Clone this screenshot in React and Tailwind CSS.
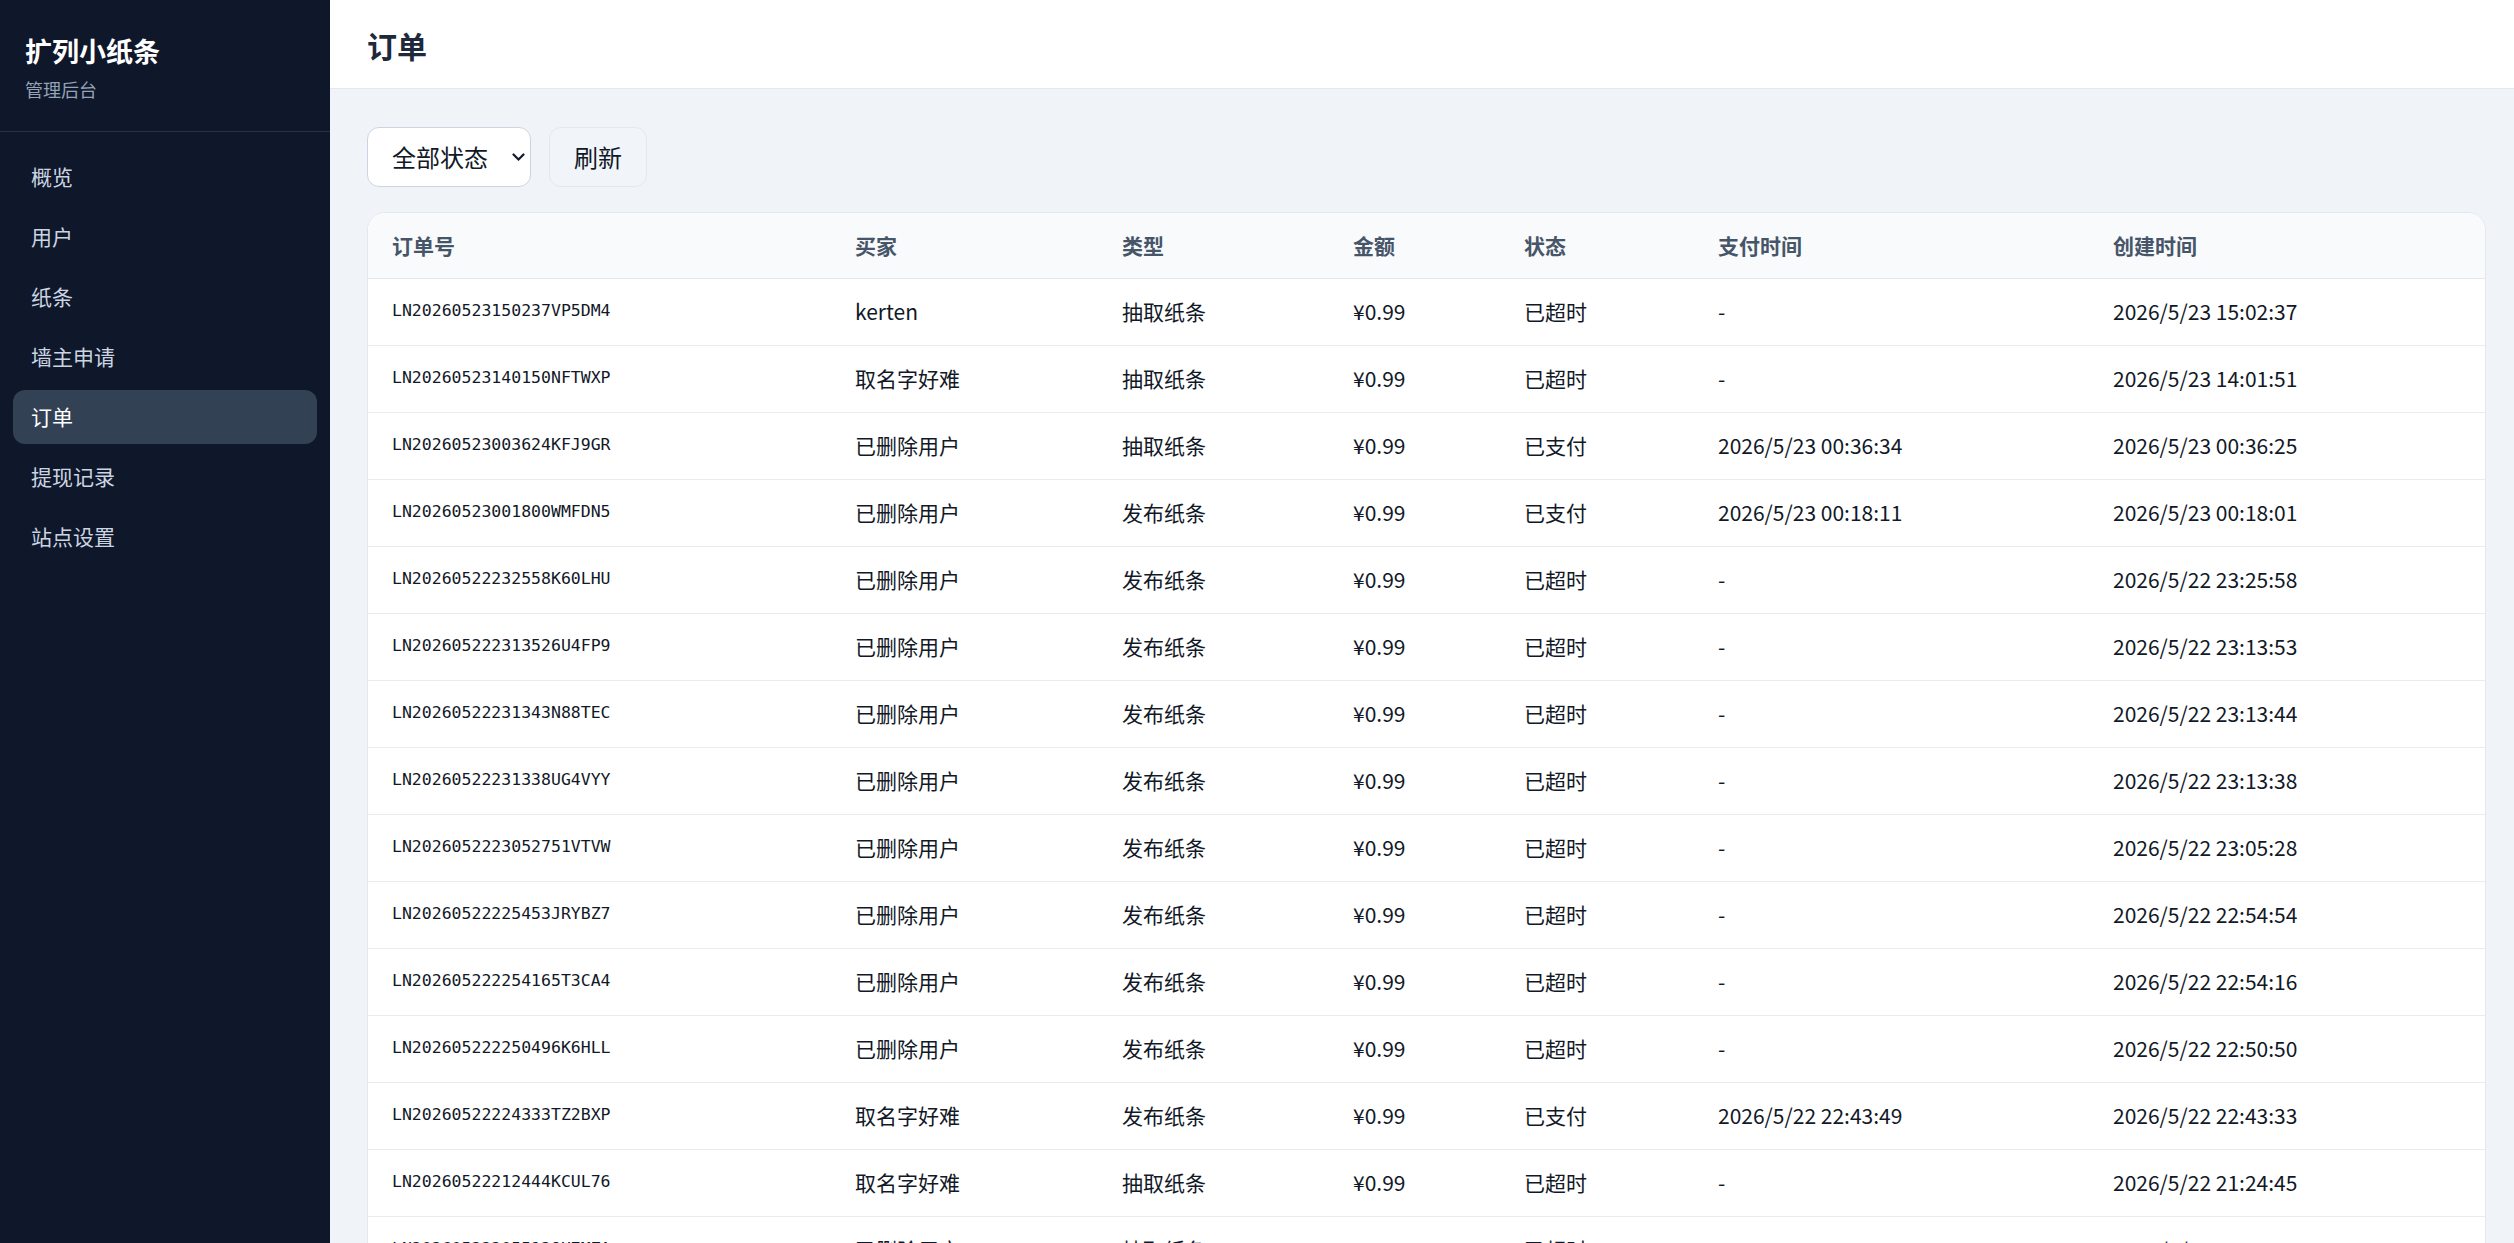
import React, { useState } from "react";

const navItems = ["概览", "用户", "纸条", "墙主申请", "订单", "提现记录", "站点设置"];

const orders = [
  ["LN20260523150237VP5DM4", "kerten", "抽取纸条", "¥0.99", "已超时", "-", "2026/5/23 15:02:37"],
  ["LN20260523140150NFTWXP", "取名字好难", "抽取纸条", "¥0.99", "已超时", "-", "2026/5/23 14:01:51"],
  ["LN20260523003624KFJ9GR", "已删除用户", "抽取纸条", "¥0.99", "已支付", "2026/5/23 00:36:34", "2026/5/23 00:36:25"],
  ["LN20260523001800WMFDN5", "已删除用户", "发布纸条", "¥0.99", "已支付", "2026/5/23 00:18:11", "2026/5/23 00:18:01"],
  ["LN20260522232558K60LHU", "已删除用户", "发布纸条", "¥0.99", "已超时", "-", "2026/5/22 23:25:58"],
  ["LN202605222313526U4FP9", "已删除用户", "发布纸条", "¥0.99", "已超时", "-", "2026/5/22 23:13:53"],
  ["LN20260522231343N88TEC", "已删除用户", "发布纸条", "¥0.99", "已超时", "-", "2026/5/22 23:13:44"],
  ["LN20260522231338UG4VYY", "已删除用户", "发布纸条", "¥0.99", "已超时", "-", "2026/5/22 23:13:38"],
  ["LN2026052223052751VTVW", "已删除用户", "发布纸条", "¥0.99", "已超时", "-", "2026/5/22 23:05:28"],
  ["LN20260522225453JRYBZ7", "已删除用户", "发布纸条", "¥0.99", "已超时", "-", "2026/5/22 22:54:54"],
  ["LN202605222254165T3CA4", "已删除用户", "发布纸条", "¥0.99", "已超时", "-", "2026/5/22 22:54:16"],
  ["LN202605222250496K6HLL", "已删除用户", "发布纸条", "¥0.99", "已超时", "-", "2026/5/22 22:50:50"],
  ["LN20260522224333TZ2BXP", "取名字好难", "发布纸条", "¥0.99", "已支付", "2026/5/22 22:43:49", "2026/5/22 22:43:33"],
  ["LN20260522212444KCUL76", "取名字好难", "抽取纸条", "¥0.99", "已超时", "-", "2026/5/22 21:24:45"],
  ["LN20260522205512QH7MZA", "已删除用户", "抽取纸条", "¥0.99", "已超时", "-", "2026/5/22 20:55:12"],
];

const columns = ["订单号", "买家", "类型", "金额", "状态", "支付时间", "创建时间"];

const Sidebar = () => (
  <aside className="w-[330px] shrink-0 bg-[#0f172a] flex flex-col">
    <div className="px-[25px] pt-[33px] pb-[30px] border-b border-[#263244]">
      <div className="text-[27px] leading-[36px] font-bold text-white">扩列小纸条</div>
      <div className="mt-[8px] text-[18px] leading-[24px] text-[#94a3b8]">管理后台</div>
    </div>
    <nav className="px-[13px] pt-[18px] flex flex-col gap-[6px]">
      {navItems.map((item) => (
        <div
          key={item}
          className={
            item === "订单"
              ? "h-[54px] rounded-[12px] px-[18px] flex items-center text-[21px] bg-[#334155] text-white"
              : "h-[54px] rounded-[12px] px-[18px] flex items-center text-[21px] text-[#cbd5e1]"
          }
        >
          {item}
        </div>
      ))}
    </nav>
  </aside>
);

const App = () => {
  const [status, setStatus] = useState("all");

  return (
    <div className="flex h-screen overflow-hidden bg-[#f0f4f8] font-['Noto_Sans_CJK_SC',sans-serif]">
      <Sidebar />
      <main className="flex-1 flex flex-col min-w-0">
        <header className="h-[89px] shrink-0 bg-white border-b border-[#e2e8f0] flex items-center px-[37px] pt-[3px]">
          <h1 className="text-[30px] font-bold text-[#1e293b]">订单</h1>
        </header>
        <div className="pl-[37px] pr-[28px] pt-[38px] flex flex-col gap-[25px]">
          <div className="flex items-center gap-[18px]">
            <div className="relative">
              <select
                value={status}
                onChange={(e) => setStatus(e.target.value)}
                className="appearance-none w-[164px] h-[60px] rounded-[12px] border border-[#cbd5e1] bg-white pl-[24px] pr-[40px] text-[24px] text-[#111827] outline-none"
              >
                <option value="all">全部状态</option>
                <option value="paid">已支付</option>
                <option value="pending">待支付</option>
                <option value="timeout">已超时</option>
              </select>
              <svg
                className="absolute right-[6px] top-[26px] pointer-events-none"
                width="13"
                height="9"
                viewBox="0 0 13 9"
                fill="none"
              >
                <path d="M1.5 1.5L6.5 6.5L11.5 1.5" stroke="#111827" strokeWidth="2.2" strokeLinecap="round" />
              </svg>
            </div>
            <button className="h-[60px] px-[24px] rounded-[12px] border border-[#e2e8f0] bg-[#f1f5f9] text-[24px] text-[#111827]">
              刷新
            </button>
          </div>

          <div className="bg-white border border-[#e2e8f0] rounded-[18px] overflow-hidden">
            <table className="w-full table-fixed border-collapse">
              <colgroup>
                <col className="w-[463px]" />
                <col className="w-[267px]" />
                <col className="w-[231px]" />
                <col className="w-[171px]" />
                <col className="w-[194px]" />
                <col className="w-[395px]" />
                <col />
              </colgroup>
              <thead>
                <tr className="bg-[#f8fafc] border-b border-[#e2e8f0]">
                  {columns.map((c) => (
                    <th key={c} className="h-[65px] pl-[24px] text-left text-[21px] font-bold text-[#475569]">
                      {c}
                    </th>
                  ))}
                </tr>
              </thead>
              <tbody>
                {orders.map((row) => (
                  <tr key={row[0]} className="border-b border-[#e8ebef]">
                    <td className="h-[67px] pl-[24px] font-['DejaVu_Sans_Mono',monospace] text-[16.5px] text-[#111827]">
                      {row[0]}
                    </td>
                    {row.slice(1).map((cell, i) => (
                      <td key={i} className="h-[67px] pl-[24px] text-[21px] text-[#111827]">
                        {cell}
                      </td>
                    ))}
                  </tr>
                ))}
              </tbody>
            </table>
          </div>
        </div>
      </main>
    </div>
  );
};

export default App;
